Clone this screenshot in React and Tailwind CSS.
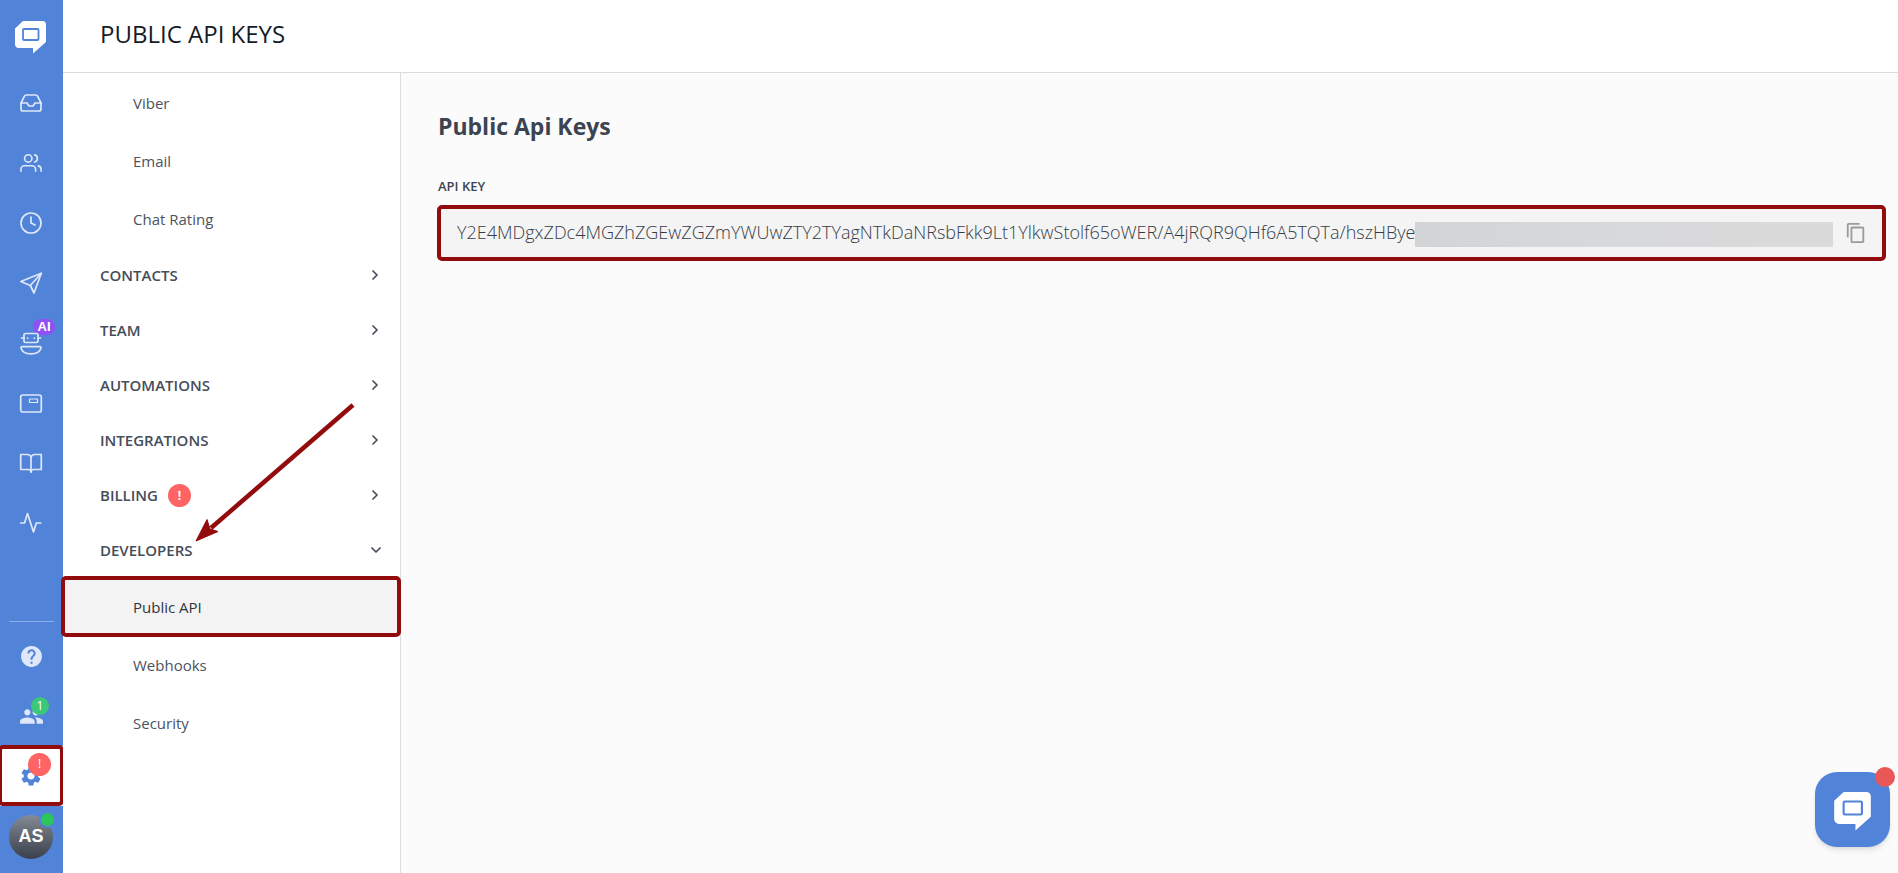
import { useState } from "react";
import { FiInbox, FiUsers, FiClock, FiChevronRight, FiChevronDown } from "react-icons/fi";
import { MdHelp, MdPeople, MdSettings, MdContentCopy } from "react-icons/md";

const API_KEY =
  "Y2E4MDgxZDc4MGZhZGEwZGZmYWUwZTY2TYagNTkDaNRsbFkk9Lt1YlkwStolf65oWER/A4jRQR9QHf6A5TQTa/hszHBye";

function Logo({ className }) {
  return (
    <svg viewBox="0 0 31 33" className={className}>
      <path
        d="M8 0H27.500a3.500 3.500 0 0 1 3.500 3.500V21L18 32.500V27H4a4 4 0 0 1-4-4V7.500z"
        fill="#fff"
      />
      <rect x="8" y="8" width="15.500" height="11" rx="1" fill="none" stroke="#5183d8" strokeWidth="1.800" />
    </svg>
  );
}

function LineIcon({ children }) {
  return (
    <svg
      viewBox="0 0 24 24"
      width="24"
      height="24"
      fill="none"
      stroke="currentColor"
      strokeWidth="1.700"
      strokeLinecap="round"
      strokeLinejoin="round"
    >
      {children}
    </svg>
  );
}

const SendIcon = () => (
  <LineIcon>
    <path d="M22.300 2.300 1.800 10.500 11.300 14.500 15 22z" />
    <path d="M22.300 2.300 11.300 14.500" />
  </LineIcon>
);

const BotIcon = () => (
  <LineIcon>
    <rect x="5" y="2.500" width="14" height="9" rx="1.500" />
    <path d="M2.500 7H5M19 7h2.500M8.600 7v.2M15.400 7v.2" />
    <path d="M3 15.700h18a1 1 0 0 1 1 1.200c-.8 3.600-4.600 5.900-10 5.900s-9.200-2.300-10-5.900a1 1 0 0 1 1-1.200z" />
  </LineIcon>
);

const WidgetIcon = () => (
  <LineIcon>
    <rect x="1.700" y="4" width="20.600" height="17" rx="2" />
    <rect x="10.500" y="8" width="8" height="3.500" strokeWidth="1.200" />
  </LineIcon>
);

const BookIcon = () => (
  <LineIcon>
    <path d="M12 6C11.500 4.500 10 3.500 8 3.500H1.700v15H9.500c1.500 0 2.500.8 2.500 2.500 0-1.700 1-2.500 2.500-2.500h7.800v-15H16c-2 0-3.500 1-4 2.500z" />
    <path d="M12 6v15" />
  </LineIcon>
);

const PulseIcon = () => (
  <LineIcon>
    <path d="M1.700 12h3.800L8.500 2.500l6 18.500L17.300 12h4.500" />
  </LineIcon>
);

const railItems = [
  { label: "Inbox", icon: <FiInbox size={24} strokeWidth={1.7} /> },
  { label: "Contacts", icon: <FiUsers size={22} strokeWidth={1.8} /> },
  { label: "History", icon: <FiClock size={24} strokeWidth={1.7} /> },
  { label: "Campaigns", icon: <SendIcon /> },
  { label: "Chatbots", icon: <BotIcon />, badge: "AI" },
  { label: "Widgets", icon: <WidgetIcon /> },
  { label: "Knowledge base", icon: <BookIcon /> },
  { label: "Reports", icon: <PulseIcon /> },
];

const channels = ["Viber", "Email", "Chat Rating"];
const sections = ["CONTACTS", "TEAM", "AUTOMATIONS", "INTEGRATIONS", "BILLING"];
const developerPages = ["Public API", "Webhooks", "Security"];

function Rail() {
  return (
    <nav aria-label="Main" className="w-[63px] shrink-0 flex flex-col bg-[#5183d8] text-[#dfe8f8]">
      <a
        href="#home"
        aria-label="Home"
        className="h-[73px] shrink-0 pt-[2px] pr-[2px] flex items-center justify-center"
      >
        <Logo className="w-[31px] h-[33px]" />
      </a>

      {railItems.map((item) => (
        <a
          key={item.label}
          href="#"
          aria-label={item.label}
          className="relative h-[60px] pr-px flex items-center justify-center"
        >
          {item.badge && (
            <span className="absolute left-[33px] top-[6px] w-[22px] h-4 rounded-full bg-[#9150f5] text-white text-[13px] leading-4 font-bold text-center font-['Liberation_Sans',sans-serif]">
              {item.badge}
            </span>
          )}
          <span className="relative">{item.icon}</span>
        </a>
      ))}

      <div className="mt-auto mx-[9px] mb-1 border-t border-[#8cafe8]" />

      <a href="#help" aria-label="Help" className="h-[60px] flex items-center justify-center">
        <MdHelp size={25} />
      </a>
      <a href="#team" aria-label="Team" className="relative h-[60px] flex items-center justify-center">
        <MdPeople size={25} />
        <span className="absolute left-[31px] top-[11px] size-[18px] rounded-full bg-[#3cc878] text-white text-xs leading-[18px] text-center">
          1
        </span>
      </a>
      <a
        href="#settings"
        aria-label="Settings"
        className="relative h-[60px] pr-px flex items-center justify-center bg-white text-[#5183d8]"
      >
        <MdSettings size={24} />
        <span className="absolute left-[28px] top-[7px] size-[23px] rounded-full bg-[#ff6464] text-white text-xs leading-[22px] text-center">
          !
        </span>
        {/* highlight */}
        <span className="absolute -left-[2px] -right-[1px] -top-[1px] bottom-0 border-4 border-[#920b0d] rounded-[5px]" />
      </a>

      <div className="h-[67px] shrink-0 px-[9px] pt-[9px]">
        <button
          type="button"
          className="relative size-11 pb-[2px] rounded-full bg-gradient-to-b from-[#858b94] to-[#3a414c] text-white text-lg font-bold font-['Liberation_Sans',sans-serif]"
        >
          AS
          <span className="absolute -right-[3px] -top-[4px] size-[17px] rounded-full border-2 border-[#5183d8] bg-[#2bc75a]" />
        </button>
      </div>
    </nav>
  );
}

function SettingsMenu({ active, onSelect }) {
  return (
    <nav aria-label="Settings" className="relative w-[338px] shrink-0 pt-px bg-white border-r border-[#dcdcdc]">
      {channels.map((name) => (
        <a key={name} href="#" className="h-[58px] pl-[70px] flex items-center text-[15px] text-[#4b535e]">
          {name}
        </a>
      ))}

      {sections.map((name) => (
        <button
          key={name}
          type="button"
          className="w-full h-[55px] pl-[37px] pr-[17px] flex items-center text-[15px] font-semibold text-[#454d59]"
        >
          {name}
          {name === "BILLING" && (
            <span className="ml-[10px] size-[23px] rounded-full bg-[#ff6464] text-white text-xs leading-[23px] font-bold text-center">
              !
            </span>
          )}
          <FiChevronRight size={16} strokeWidth={2.6} className="ml-auto mb-[2px]" />
        </button>
      ))}

      <button
        type="button"
        className="w-full h-[55px] pl-[37px] pr-4 flex items-center text-[15px] font-semibold text-[#454d59]"
      >
        DEVELOPERS
        <FiChevronDown size={16} strokeWidth={2.6} className="ml-auto mb-[2px]" />
      </button>

      {developerPages.map((name) => (
        <a
          key={name}
          href="#"
          onClick={() => onSelect(name)}
          className={
            name === active
              ? "relative h-[58px] pl-[70px] flex items-center text-[15px] text-[#2f3640] bg-[#f3f3f3]"
              : "h-[58px] pl-[70px] flex items-center text-[15px] text-[#4b535e]"
          }
        >
          {name}
          {name === active && (
            <span className="absolute -left-[2px] -right-[1px] -top-[2px] -bottom-px border-4 border-[#920b0d] rounded-[5px]" />
          )}
        </a>
      ))}

      {/* arrow pointing at Developers */}
      <svg
        viewBox="0 0 160 140"
        className="absolute left-[132px] top-[329px] w-[160px] h-[140px] pointer-events-none"
      >
        <path d="M158 3 16 126" stroke="#920b0d" strokeWidth="4.500" fill="none" />
        <path d="M1 139 12 117.500 15 127 23 129.500z" fill="#920b0d" stroke="#920b0d" strokeWidth="1" />
      </svg>
    </nav>
  );
}

export default function App() {
  const [active, setActive] = useState("Public API");

  return (
    <div className="h-screen flex overflow-hidden bg-[#fbfbfb] font-['Open_Sans',sans-serif]">
      <Rail />

      <div className="flex-1 min-w-0 flex flex-col">
        <header className="h-[73px] shrink-0 pl-[37px] pb-1 flex items-center bg-white border-b border-[#dcdcdc]">
          <h1 className="text-2xl text-[#151b26]">PUBLIC API KEYS</h1>
        </header>

        <div className="flex-1 min-h-0 flex">
          <SettingsMenu active={active} onSelect={setActive} />

          <main className="flex-1 min-w-0 pt-[35px] pl-9 pr-3">
            <h2 className="pl-px text-[23px] leading-9 font-bold text-[#3c4451]">Public Api Keys</h2>

            <label htmlFor="api-key" className="block mt-8 pl-px text-[13px] leading-5 font-semibold text-[#3c4451]">
              API KEY
            </label>
            <div className="mt-[9px] h-14 pl-4 pr-[15px] flex items-center border-4 border-[#920b0d] rounded-[5px] bg-[#f4f4f4]">
              <input
                id="api-key"
                type="text"
                readOnly
                value={API_KEY}
                className="field-sizing-content shrink-0 h-10 pb-[2px] bg-transparent outline-none text-lg font-light text-[#343c48]"
              />
              {/* hidden part of the key */}
              <div className="flex-1 h-[25px] mt-[2px] bg-gradient-to-r from-[#d3d4d6] via-[#d8d9db] to-[#dadada]" />
              <button type="button" aria-label="Copy key" className="ml-3 text-[#9b9b9b]">
                <MdContentCopy size={22} />
              </button>
            </div>
          </main>
        </div>
      </div>

      {/* chat launcher */}
      <button
        type="button"
        aria-label="Open chat"
        className="fixed right-2 bottom-[26px] size-[75px] pt-1 rounded-[22px] bg-[#5183d8] shadow-md flex items-center justify-center"
      >
        <Logo className="w-[37px] h-[39px]" />
        <span className="absolute -right-[5px] -top-[5px] size-5 rounded-full bg-[#eb5757]" />
      </button>
    </div>
  );
}
